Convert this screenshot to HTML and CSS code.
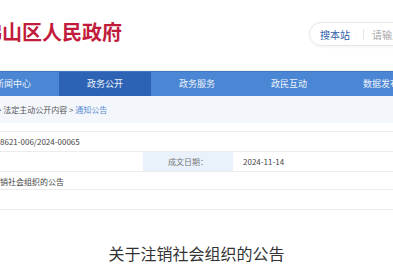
FILE: index.html
```html
<!DOCTYPE html>
<html lang="zh-CN">
<head>
    <meta charset="UTF-8">
    <meta name="viewport" content="width=device-width, initial-scale=1.0">
    <title>关于注销社会组织的公告</title>
    <link rel="stylesheet" href="styles.css">
</head>
<body>
    <div class="header">
        <div class="logo">佛山区人民政府</div>
        <div class="search">
            <span class="scope">搜本站</span>
            <svg class="caret" width="6" height="4" viewBox="0 0 6 4"><path d="M0.5 0.5 L3 3 L5.5 0.5" fill="none" stroke="#aab" stroke-width="0.9"/></svg>
            <span class="divider"></span>
            <span class="placeholder">请输入关键词</span>
        </div>
    </div>

    <div class="nav">
        <a class="nav-item">新闻中心</a>
        <a class="nav-item active">政务公开</a>
        <a class="nav-item">政务服务</a>
        <a class="nav-item">政民互动</a>
        <a class="nav-item">数据发布</a>
    </div>

    <div class="crumbs">
        <span class="crumb-cut">&gt;</span> 法定主动公开内容 &gt; <span class="crumb-current">通知公告</span>
    </div>

    <div class="info">
        <div class="row">
            <div class="cell wide">8621-006/2024-00065</div>
        </div>
        <div class="row">
            <div class="cell value"></div>
            <div class="cell label">成文日期：</div>
            <div class="cell date">2024-11-14</div>
        </div>
        <div class="row short">
            <div class="cell wide cut">注销社会组织的公告</div>
        </div>
        <div class="row"></div>
        <div class="row short"></div>
    </div>

    <h1 class="title">关于注销社会组织的公告</h1>
</body>
</html>
```

FILE: styles.css
```css
body {
    margin: 0;
    overflow: hidden;
    font-family: "Noto Sans CJK SC", "Noto Sans", sans-serif;
    background-color: #fff;
    color: #444;
}

.header {
    height: 70px;
    display: flex;
    justify-content: space-between;
    align-items: flex-start;
    border-bottom: 1px solid #f0f1f4;
}

.logo {
    margin-top: 21px;
    margin-left: -18px;
    font-size: 20px;
    line-height: 22px;
    font-weight: bold;
    color: #c21c3c;
    letter-spacing: 0;
}

.search {
    margin-top: 22px;
    margin-right: -40px;
    width: 124px;
    height: 24px;
    box-sizing: border-box;
    border: 1px solid #e4e7ee;
    border-radius: 13px;
    box-shadow: 0 1px 3px rgba(0, 0, 0, 0.06);
    display: flex;
    align-items: center;
    padding-left: 10px;
    font-size: 10px;
    white-space: nowrap;
    overflow: hidden;
}

.scope {
    color: #2b5aa8;
}

.caret {
    margin-left: 5px;
}

.divider {
    width: 1px;
    height: 11px;
    background-color: #e2e4ea;
    margin: 0 9px 0 6px;
}

.placeholder {
    color: #a8a8a8;
}

.nav {
    height: 24px;
    display: flex;
    margin-left: -33px;
    background-color: #4a86d3;
    border-top: 1px solid #3f77c2;
}

.nav-item {
    flex: none;
    width: 92px;
    text-align: center;
    line-height: 24px;
    font-size: 9px;
    color: #eef3fb;
}

.nav-item.active {
    background-color: #2c63b4;
}

.crumbs {
    height: 27px;
    line-height: 27px;
    background-color: #f3f6fb;
    font-size: 8px;
    color: #555;
    white-space: nowrap;
    margin-left: -3px;
}

.crumb-current {
    color: #5b8bd3;
}

.info {
    margin-top: 8px;
}

.row {
    height: 19px;
    display: flex;
    border-top: 1px solid #ececec;
    font-size: 8px;
    line-height: 19px;
}

.row.short {
    height: 17px;
}

.cell.wide {
    flex: 1;
}

.cell.cut {
    margin-left: -8px;
}

.cell.value {
    width: 143px;
}

.cell.label {
    width: 90px;
    text-align: center;
    background-color: #e9f1fb;
    color: #777;
}

.cell.date {
    flex: 1;
    padding-left: 10px;
}

.title {
    margin: 15px 0 0;
    text-align: center;
    font-size: 16px;
    line-height: 22px;
    font-weight: normal;
    color: #333;
}
```
